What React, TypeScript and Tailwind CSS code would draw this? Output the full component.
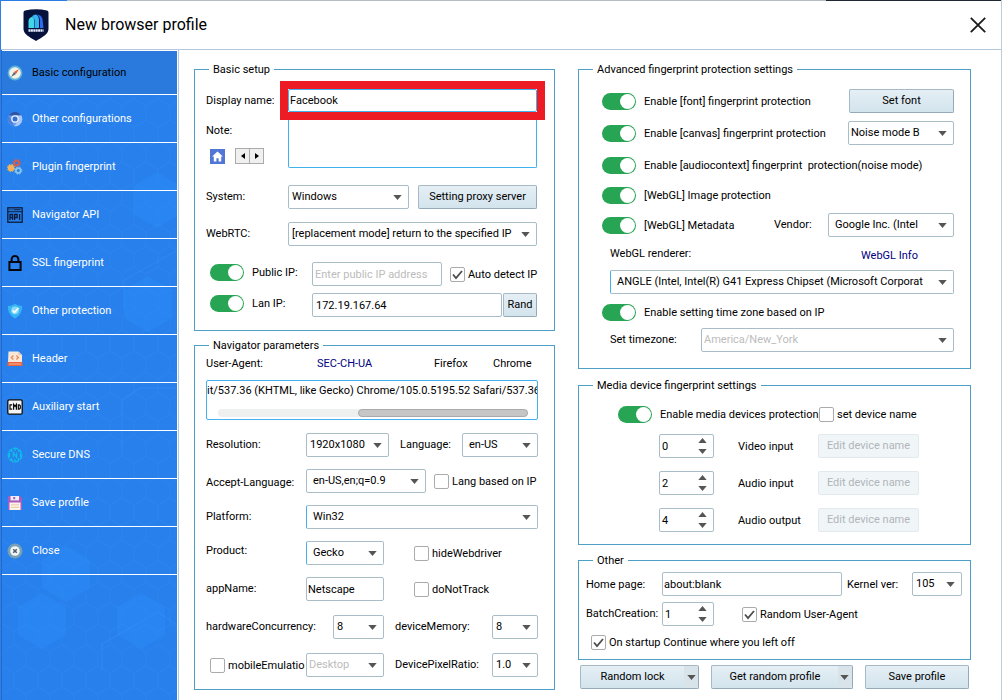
import React, { useId, useState } from "react";
import clsx from "clsx";

function Arrow({ up = false }: { up?: boolean }) {
  return (
    <svg viewBox="0 0 10 6" className={clsx("h-[5px] w-[9px]", up && "rotate-180")} aria-hidden="true">
      <path d="M0 0h10L5 6z" fill="#555" />
    </svg>
  );
}

type SelectProps = {
  id?: string;
  label: string;
  value: string;
  className?: string;
  pad?: string;
  active?: boolean;
  disabled?: boolean;
};

function Select({ id, label, value, className, pad = "pl-[3px]", active, disabled }: SelectProps) {
  return (
    <div className={clsx("relative h-6 shrink-0", className)}>
      <select
        id={id}
        aria-label={label}
        disabled={disabled}
        className={clsx(
          "h-6 w-full appearance-none rounded-xs border border-[#a9bdc9] bg-white pr-4 disabled:text-[#bcbcbc] disabled:opacity-100",
          active && "border-l-[#41b1f0]",
          pad,
        )}
      >
        <option>{value}</option>
      </select>
      <span className="pointer-events-none absolute top-0 right-[7px] flex h-6 items-center">
        <Arrow />
      </span>
    </div>
  );
}

function Field({ className, ...rest }: React.InputHTMLAttributes<HTMLInputElement>) {
  return (
    <input
      {...rest}
      className={clsx("h-6 min-w-0 rounded-xs border bg-white placeholder:text-[#bcbcbc]", className)}
    />
  );
}

function Toggle({ children, className }: { children: React.ReactNode; className?: string }) {
  return (
    <label className={clsx("flex items-center whitespace-pre", className)}>
      <input
        type="checkbox"
        role="switch"
        defaultChecked
        className="flex h-[17px] w-[34px] shrink-0 appearance-none items-center rounded-full bg-gray-400 px-px before:size-[15px] before:rounded-full before:bg-white checked:justify-end checked:bg-[#28a455]"
      />
      <span className="pt-[2px] pl-2">{children}</span>
    </label>
  );
}

function Check({ children, checked, className }: { children: React.ReactNode; checked?: boolean; className?: string }) {
  return (
    <label className={clsx("flex items-center gap-[3px] whitespace-nowrap", className)}>
      <span className="relative size-[15px] shrink-0">
        <input
          type="checkbox"
          defaultChecked={checked}
          className="peer block size-[15px] appearance-none rounded-xs border border-[#ababaf] bg-white"
        />
        <svg
          viewBox="0 0 15 15"
          className="pointer-events-none absolute inset-0 hidden peer-checked:block"
          fill="none"
          stroke="#4c4c4c"
          strokeWidth="1.8"
          aria-hidden="true"
        >
          <path d="M3 7.5l3 3.5 6-7" />
        </svg>
      </span>
      <span className="pt-px">{children}</span>
    </label>
  );
}

function Spinner({ label, start, className }: { label: string; start: number; className: string }) {
  const [value, setValue] = useState(start);
  return (
    <div className={clsx("relative h-6 shrink-0", className)}>
      <input
        type="number"
        aria-label={label}
        value={value}
        onChange={(e) => setValue(Number(e.target.value))}
        className="h-6 w-full appearance-none rounded-xs border border-[#a9bdc9] bg-white pl-[2px] [-moz-appearance:textfield] [&::-webkit-inner-spin-button]:appearance-none"
      />
      <div className="absolute top-0 right-[7px] flex h-6 flex-col justify-between py-1">
        <button type="button" aria-label={`Increase ${label}`} onClick={() => setValue(value + 1)}>
          <Arrow up />
        </button>
        <button type="button" aria-label={`Decrease ${label}`} onClick={() => setValue(Math.max(0, value - 1))}>
          <Arrow />
        </button>
      </div>
    </div>
  );
}

function Button({ children, className, menu, disabled }: { children: React.ReactNode; className?: string; menu?: boolean; disabled?: boolean }) {
  return (
    <button
      type="button"
      disabled={disabled}
      className={clsx(
        "flex h-6 shrink-0 items-center rounded-xs border whitespace-nowrap",
        disabled
          ? "border-[#e3eaee] bg-[#f0f5f8] text-[#b0b5b8]"
          : "border-[#a5b9c6] border-r-[#94aab8] border-b-[#94aab8] bg-linear-to-b from-[#e5eff5] to-[#d3e4ed]",
        className,
      )}
    >
      <span className="flex-1 text-center">{children}</span>
      {menu && (
        <span className="flex h-full w-[14px] items-center justify-center bg-[#d9e4ea]">
          <Arrow />
        </span>
      )}
    </button>
  );
}

function Group({ title, className, inner, children }: { title: string; className?: string; inner: string; children: React.ReactNode }) {
  return (
    <fieldset className={clsx("min-w-0 border border-[#4e9fc6]", className)}>
      <legend className="ml-[14px] h-[15px] px-1 leading-[15px]">{title}</legend>
      <div className={inner}>{children}</div>
    </fieldset>
  );
}

function Row({ className, children }: { className?: string; children: React.ReactNode }) {
  return <div className={clsx("flex h-6 items-center", className)}>{children}</div>;
}

const icons: Record<string, React.ReactNode> = {
  compass: (
    <>
      <circle cx="8" cy="8" r="7.4" fill="#5db2dc" />
      <circle cx="8" cy="8" r="5.8" fill="#f4f1e6" />
      <path d="M12 4 9 9 7 7z" fill="#e85a3a" />
      <path d="M4 12 7 7l2 2z" fill="#5b6878" />
    </>
  ),
  chromium: (
    <>
      <circle cx="8" cy="8" r="7.3" fill="#6d9ff0" />
      <path d="M1.7 4.4A7.3 7.3 0 0 1 14.3 4.5H8z" fill="#2c56a8" />
      <path d="M1.7 4.4 5 10.2 7 15A7.3 7.3 0 0 1 1.7 4.4z" fill="#4a7fdc" />
      <path d="M8 4.5h6.3A7.3 7.3 0 0 1 7.4 15.3l3.6-5.4z" fill="#a9c8fa" />
      <circle cx="8" cy="8" r="3.8" fill="#e9f1fc" />
      <circle cx="8" cy="8" r="2.5" fill="#356fd2" />
    </>
  ),
  gears: (
    <>
      <circle cx="9.6" cy="4" r="2.4" fill="none" stroke="#dd5c42" strokeWidth="1.8" />
      <circle cx="9.6" cy="4" r="3.6" fill="none" stroke="#dd5c42" strokeWidth="1" strokeDasharray="1.5 1.4" />
      <circle cx="4" cy="9" r="3.2" fill="#f6b256" />
      <circle cx="4" cy="9" r="3.7" fill="none" stroke="#f6b256" strokeDasharray="1.5 1.4" />
      <circle cx="11.3" cy="11.6" r="2.4" fill="none" stroke="#84c6ee" strokeWidth="1.8" />
      <circle cx="11.3" cy="11.6" r="3.6" fill="none" stroke="#84c6ee" strokeDasharray="1.5 1.4" />
    </>
  ),
  api: (
    <>
      <rect x="0.8" y="0.8" width="14.4" height="14.4" fill="none" stroke="#0b1a38" strokeWidth="1.3" />
      <path d="M1 4.8h14M2.5 2.8h1M4.5 2.8h1M6.5 2.8h7" stroke="#0b1a38" strokeWidth="1.1" />
      <path d="M3 13V7.5h2.6V13M3 10.5h2.6M7.6 13V7.5h2.6v3H7.6M12.6 7v6" fill="none" stroke="#0b1a38" strokeWidth="1.3" />
    </>
  ),
  lock: (
    <>
      <rect x="2.4" y="7" width="11.2" height="8" fill="none" stroke="#05070c" strokeWidth="2" />
      <path d="M4.6 7V4.4a3.4 3.4 0 0 1 6.8 0V7" fill="none" stroke="#05070c" strokeWidth="2" />
    </>
  ),
  shield: (
    <>
      <path d="M8 .8C5.8 2.4 3.4 3 .8 3c.2 6 2.4 10 7.2 12.4C12.8 13 15 9 15.2 3 12.6 3 10.2 2.4 8 .8z" fill="#36b5f4" />
      <circle cx="8" cy="7.4" r="3.8" fill="#8bd9fb" />
      <path d="M5.6 7.4l1.9 1.9L11.5 5" fill="none" stroke="#fff" strokeWidth="1.5" />
    </>
  ),
  header: (
    <>
      <path d="M1.5.5h10L15 4v7H1z" fill="#f7e7da" />
      <path d="M11.5.5 15 4h-3.5z" fill="#dcc3b3" />
      <path d="M.5 11h15v4H.5z" fill="#e8643e" />
      <path d="M2 13h12" stroke="#f7b59b" />
      <path d="M6.4 4.5 4.4 6.5l2 2M9.4 4.5l2 2-2 2" fill="none" stroke="#ee8a4e" strokeWidth="1.3" />
    </>
  ),
  cmd: (
    <>
      <rect x="0.8" y="0.8" width="14.4" height="14.4" rx="1.5" fill="#f4f4f4" stroke="#0a0a0a" strokeWidth="1.3" />
      <path d="M5.2 5.8H3v4.4h2.2M6.6 10.7V5.4l1.4 2 1.4-2v5.3M11.3 5.8v4.4h1l1-1V6.8l-1-1z" fill="none" stroke="#0a0a0a" strokeWidth="1.2" />
    </>
  ),
  dns: (
    <g fill="none" stroke="#10bfe6" strokeWidth="1.2">
      <circle cx="8" cy="8" r="6.8" strokeDasharray="5 1" />
      <path d="M5 2.5 4 5M11 2.5 12 5M5 13.5 4 11M11 13.5 12 11M8 1v3M8 12v3" />
      <path d="M2.5 6v4M6.3 10.5v-5l3.4 5v-5M13.5 6v4" />
    </g>
  ),
  save: (
    <>
      <path d="M1 1h12l2 2v12H1z" fill="#a95bc0" />
      <rect x="3.5" y="1" width="8.5" height="4.4" fill="#eceff3" />
      <rect x="6.2" y="2" width="2" height="2.2" fill="#a95bc0" />
      <rect x="2.5" y="7.5" width="11" height="7.5" fill="#fdf3e6" />
      <path d="M4 9.8h8M4 12.3h8" stroke="#e6c9a8" />
    </>
  ),
  close: (
    <>
      <circle cx="8" cy="8" r="7.5" fill="#78a0b4" />
      <circle cx="8" cy="8" r="4.8" fill="#f1f5f7" />
      <path d="M6.2 6.2l3.6 3.6M9.8 6.2 6.2 9.8" stroke="#4d5d68" strokeWidth="1.5" />
    </>
  ),
};

const nav = [
  ["compass", "Basic configuration"],
  ["chromium", "Other configurations"],
  ["gears", "Plugin fingerprint"],
  ["api", "Navigator API"],
  ["lock", "SSL fingerprint"],
  ["shield", "Other protection"],
  ["header", "Header"],
  ["cmd", "Auxiliary start"],
  ["dns", "Secure DNS"],
  ["save", "Save profile"],
  ["close", "Close"],
];

function HexBackdrop() {
  return (
    <svg className="absolute inset-0 size-full" aria-hidden="true">
      <defs>
        <pattern id="hex" width="24" height="42" patternUnits="userSpaceOnUse">
          <path d="M12 0v7L0 14v14l12 7v7M12 7l12 7v14l-12 7" fill="none" stroke="#3a8ef5" strokeOpacity=".3" />
        </pattern>
      </defs>
      <rect width="100%" height="100%" fill="url(#hex)" />
      <g fill="#2a8bfb" fillOpacity=".45">
        <path d="M155 122l24 14v28l-24 14-24-14v-28z" />
        <path d="M146 226l24 14v28l-24 14-24-14v-28z" />
        <path d="M64 496l24 14v28l-24 14-24-14v-28z" />
        <path d="M40 543l24 14v28l-24 14-24-14v-28z" />
        <path d="M139 543l24 14v28l-24 14-24-14v-28z" />
      </g>
      <path d="M100 620v-26l56-32 20 14M120 400V350l18-12h38M122 260v-30l54-30" fill="none" stroke="#3f97ff" strokeOpacity=".4" />
    </svg>
  );
}

function Sidebar() {
  return (
    <nav className="relative w-[177px] shrink-0 border-r border-l border-r-white border-l-[#2169cc] bg-[#2780ec]">
      <HexBackdrop />
      <ul className="relative border-t border-white">
        {nav.map(([icon, text], i) => (
          <li key={text} className={clsx("border-b border-white", i === 0 ? "h-11 bg-[#2a78d8]/80" : "h-12")}>
            <button
              type="button"
              className={clsx("flex size-full items-center gap-[9px] pl-[5px] text-left", i === 0 ? "text-black" : "text-white")}
            >
              <svg viewBox="0 0 16 16" className="size-4 shrink-0" aria-hidden="true">
                {icons[icon]}
              </svg>
              <span className="pt-px">{text}</span>
            </button>
          </li>
        ))}
      </ul>
    </nav>
  );
}

function BasicSetup() {
  const id = useId();
  return (
    <Group title="Basic setup" inner="pr-[17px] pb-[13px] pl-[11px]">
      <div className="flex h-[43px] items-center pt-1">
        <label htmlFor={`${id}-name`} className="w-[82px] shrink-0">Display name:</label>
        <div className="-mr-2 -ml-2 flex h-[39px] flex-1 border-8 border-[#ed1b24]">
          <Field id={`${id}-name`} defaultValue="Facebook" className="h-full w-full border-[#41b1f0] px-px" />
        </div>
      </div>
      <div className="flex h-12">
        <div className="flex w-[82px] shrink-0 flex-col gap-[9px] pt-[3px]">
          <label htmlFor={`${id}-note`} className="leading-4">Note:</label>
          <div className="flex items-center pl-1">
            <button type="button" aria-label="Home" className="mr-[10px] flex size-[15px] items-center justify-center bg-[#5276d6]">
              <svg viewBox="0 0 14 14" className="size-[13px]" aria-hidden="true">
                <path d="M7 1.5 1.2 7H3v5.5h2.8V9h2.4v3.5H11V7h1.8z" fill="#fff" />
              </svg>
            </button>
            {["Previous", "Next"].map((name, i) => (
              <button key={name} type="button" aria-label={name} className="-mr-px flex h-4 w-[15px] items-center justify-center border border-[#ababab] bg-[#f0f0f0]">
                <svg viewBox="0 0 4 6" className={clsx("h-[6px] w-1", i === 0 && "rotate-180")} aria-hidden="true">
                  <path d="M0 0l4 3-4 3z" fill="#000" />
                </svg>
              </button>
            ))}
          </div>
        </div>
        <textarea id={`${id}-note`} className="h-12 min-w-0 flex-1 resize-none rounded-b-xs border border-t-0 border-[#41b1f0] px-px" />
      </div>
      <Row className="mt-[17px]">
        <label htmlFor={`${id}-sys`} className="w-[82px] shrink-0">System:</label>
        <Select id={`${id}-sys`} label="System" value="Windows" className="mr-[9px] w-[121px]" />
        <Button className="flex-1">Setting proxy server</Button>
      </Row>
      <Row className="mt-[13px]">
        <label htmlFor={`${id}-rtc`} className="w-[82px] shrink-0">WebRTC:</label>
        <Select id={`${id}-rtc`} label="WebRTC" value="[replacement mode] return to the specified IP" className="flex-1" />
      </Row>
      <Row className="mt-4">
        <Toggle className="h-5 w-[106px] shrink-0 self-start pl-1">Public IP:</Toggle>
        <Field aria-label="Public IP address" placeholder="Enter public IP address" className="mr-2 flex-1 border-[#a9bdc9] pl-[2px]" />
        <Check checked className="w-[87px]">Auto detect IP</Check>
      </Row>
      <Row className="mt-[7px]">
        <Toggle className="h-5 w-[106px] shrink-0 self-start pl-1">Lan IP:</Toggle>
        <Field aria-label="Lan IP address" defaultValue="172.19.167.64" className="mr-px flex-1 border-[#a9bdc9] pl-[3px]" />
        <Button className="w-[34px]">Rand</Button>
      </Row>
    </Group>
  );
}

function NavigatorParameters() {
  const id = useId();
  return (
    <Group title="Navigator parameters" className="mt-[7px]" inner="pr-4 pb-3 pl-[11px]">
      <div className="flex h-[22px] items-center">
        <label htmlFor={`${id}-ua`} className="w-[111px]">User-Agent:</label>
        <a href="#sec-ch-ua" className="flex-1 text-[#000080]">SEC-CH-UA</a>
        <button type="button" className="w-[59px] text-left">Firefox</button>
        <button type="button" className="w-[45px] text-left">Chrome</button>
      </div>
      <div className="mt-[5px] flex h-10 flex-col justify-between rounded-xs border border-[#41b1f0] pb-[2px]">
        <input
          id={`${id}-ua`}
          defaultValue="it/537.36 (KHTML, like Gecko) Chrome/105.0.5195.52 Safari/537.36"
          className="h-[18px] w-full min-w-0"
        />
        <div className="mr-[9px] ml-[11px] flex h-2 justify-end rounded-full bg-[#eeefef]">
          <div className="w-[55%] rounded-full border border-[#aaa] bg-[#c6c6c6]" />
        </div>
      </div>
      <Row className="mt-[13px]">
        <label htmlFor={`${id}-res`} className="w-[100px] shrink-0">Resolution:</label>
        <Select id={`${id}-res`} label="Resolution" value="1920x1080" className="w-[83px]" />
        <label htmlFor={`${id}-lang`} className="flex-1 pl-[11px]">Language:</label>
        <Select id={`${id}-lang`} label="Language" value="en-US" pad="pl-[6px]" className="w-[76px]" />
      </Row>
      <Row className="mt-3">
        <label htmlFor={`${id}-acc`} className="w-[100px] shrink-0 pt-1">Accept-Language:</label>
        <Select id={`${id}-acc`} label="Accept-Language" value="en-US,en;q=0.9" pad="pl-[6px]" className="mr-2 w-[120px]" />
        <Check className="flex-1">Lang based on IP</Check>
      </Row>
      <Row className="mt-3">
        <label htmlFor={`${id}-plat`} className="w-[100px] shrink-0">Platform:</label>
        <Select id={`${id}-plat`} label="Platform" value="Win32" pad="pl-[6px]" active className="flex-1" />
      </Row>
      <Row className="mt-3">
        <label htmlFor={`${id}-prod`} className="w-[100px] shrink-0 pb-1">Product:</label>
        <Select id={`${id}-prod`} label="Product" value="Gecko" pad="pl-[6px]" active className="mr-[30px] w-[78px]" />
        <Check>hideWebdriver</Check>
      </Row>
      <Row className="mt-3">
        <label htmlFor={`${id}-app`} className="w-[100px] shrink-0">appName:</label>
        <Field id={`${id}-app`} defaultValue="Netscape" className="mr-[30px] w-[78px] border-[#a9bdc9] px-px" />
        <Check>doNotTrack</Check>
      </Row>
      <Row className="mt-[14px]">
        <label htmlFor={`${id}-hw`} className="w-[127px] shrink-0">hardwareConcurrency:</label>
        <Select id={`${id}-hw`} label="hardwareConcurrency" value="8" className="w-[51px]" />
        <label htmlFor={`${id}-mem`} className="flex-1 pl-[11px]">deviceMemory:</label>
        <Select id={`${id}-mem`} label="deviceMemory" value="8" className="w-[46px]" />
      </Row>
      <Row className="mt-[14px]">
        <Check className="w-[100px] shrink-0 pl-1">mobileEmulatio</Check>
        <Select label="Emulated device" value="Desktop" pad="pl-[2px]" disabled className="w-[78px]" />
        <label htmlFor={`${id}-dpr`} className="flex-1 pl-[11px]">DevicePixelRatio:</label>
        <Select id={`${id}-dpr`} label="DevicePixelRatio" value="1.0" className="w-[46px]" />
      </Row>
    </Group>
  );
}

function AdvancedSettings() {
  const id = useId();
  return (
    <Group title="Advanced fingerprint protection settings" inner="pr-4 pb-4 pl-[23px]">
      <Row className="mt-3">
        <Toggle className="flex-1">Enable [font] fingerprint protection</Toggle>
        <Button className="w-[105px]">Set font</Button>
      </Row>
      <Row className="mt-2">
        <Toggle className="flex-1">Enable [canvas] fingerprint protection</Toggle>
        <Select label="Canvas noise mode" value="Noise mode B" pad="pl-[2px]" className="w-[106px]" />
      </Row>
      <Row className="mt-2">
        <Toggle>{"Enable [audiocontext] fingerprint  protection(noise mode)"}</Toggle>
      </Row>
      <Row className="mt-[6px]">
        <Toggle>[WebGL] Image protection</Toggle>
      </Row>
      <Row className="mt-[6px]">
        <Toggle className="flex-1">[WebGL] Metadata</Toggle>
        <label htmlFor={`${id}-vendor`} className="w-[54px]">Vendor:</label>
        <Select id={`${id}-vendor`} label="Vendor" value="Google Inc. (Intel" pad="pl-[6px]" className="w-[126px]" />
      </Row>
      <Row className="mt-[5px] pl-2">
        <label htmlFor={`${id}-renderer`} className="flex-1">WebGL renderer:</label>
        <a href="#webgl-info" className="w-[93px] pt-1 text-[#000080]">WebGL Info</a>
      </Row>
      <Row className="mt-1 pl-2">
        <Select id={`${id}-renderer`} label="WebGL renderer" value="ANGLE (Intel, Intel(R) G41 Express Chipset (Microsoft Corporat" pad="pl-[6px]" active className="flex-1" />
      </Row>
      <Row className="mt-[6px]">
        <Toggle>Enable setting time zone based on IP</Toggle>
      </Row>
      <Row className="mt-1 pl-2">
        <label htmlFor={`${id}-tz`} className="w-[91px] shrink-0">Set timezone:</label>
        <Select id={`${id}-tz`} label="Timezone" value="America/New_York" pad="pl-[2px]" disabled className="flex-1" />
      </Row>
    </Group>
  );
}

const devices = [
  { name: "Video input", count: 0 },
  { name: "Audio input", count: 2 },
  { name: "Audio output", count: 4 },
];

function MediaSettings() {
  return (
    <Group title="Media device fingerprint settings" className="mt-[9px]" inner="pr-4 pb-3 pl-[39px]">
      <Row className="mt-[9px]">
        <Toggle className="w-[201px]">Enable media devices protection</Toggle>
        <Check>set device name</Check>
      </Row>
      <div className="mt-2 flex flex-col gap-[13px] pl-[41px]">
        {devices.map((device) => (
          <Row key={device.name}>
            <Spinner label={device.name} start={device.count} className="mr-6 w-[55px]" />
            <span className="w-20 pt-[2px]">{device.name}</span>
            <Button disabled className="w-[101px]">Edit device name</Button>
          </Row>
        ))}
      </div>
    </Group>
  );
}

function OtherSettings() {
  const id = useId();
  return (
    <Group title="Other" className="mt-2" inner="pr-2 pb-[5px] pl-[7px]">
      <Row className="mt-1">
        <label htmlFor={`${id}-home`} className="w-[76px] shrink-0 pt-[2px]">Home page:</label>
        <Field id={`${id}-home`} defaultValue="about:blank" className="mr-[5px] flex-1 border-[#a9bdc9] px-px" />
        <label htmlFor={`${id}-ver`} className="w-[65px] shrink-0 pt-[2px]">Kernel ver:</label>
        <Select id={`${id}-ver`} label="Kernel version" value="105" className="w-[50px]" />
      </Row>
      <Row className="mt-[6px]">
        <span className="w-[76px] shrink-0">BatchCreation:</span>
        <Spinner label="BatchCreation" start={1} className="mr-7 w-[52px]" />
        <Check checked>Random User-Agent</Check>
      </Row>
      <Row className="mt-1 pl-[5px]">
        <Check checked>On startup Continue where you left off</Check>
      </Row>
    </Group>
  );
}

function Header() {
  return (
    <header className="flex h-[49px] items-center border-b border-[#b3c8dc] pr-[15px] pl-[22px]">
      <svg viewBox="0 0 26 32" className="mr-4 h-8 w-[26px]" aria-hidden="true">
        <path d="M2 1.5Q13-1 24 1.5q1.5.3 1.5 2V20c0 5-6 8-12.5 12C6.500 28 .5 25 .5 20V3.500q0-1.700 1.500-2z" fill="#06123c" />
        <path d="M5.500 19v-6.500q0-3.500 3-4.500 2.500-.5 2.500 3V19z" fill="#41d6e8" />
        <path d="M9 7.500Q10.500 5.500 13 5.500q2.500 1 3 5V19h-4.500v-8q-.5-2.500-2.500-3.500z" fill="#35b4f2" />
        <path d="M13.500 5.500q5 .3 6 4.500l1 9h-3.500v-8q-.5-4-3.500-5.500z" fill="#2c6bf0" />
        <path d="M5.500 21.500h15" stroke="#e6ecff" strokeWidth="2.5" strokeDasharray="2 .4" />
      </svg>
      <h1 className="flex-1 text-base">New browser profile</h1>
      <button type="button" aria-label="Close window">
        <svg viewBox="0 0 16 16" className="size-4" stroke="#1a1a1a" strokeWidth="1.8" aria-hidden="true">
          <path d="M.8.8l14.400 14.400M15.200.8.8 15.200" />
        </svg>
      </button>
    </header>
  );
}

export default function App() {
  return (
    <div className="flex min-h-screen flex-col border-r border-l border-r-[#c3ccd4] border-l-[#2f7fe4] bg-white font-['Roboto','Liberation_Sans',sans-serif] text-[11px] leading-4 text-black">
      <div className="flex h-px">
        <div className="w-[66px] bg-[#2b7de6]" />
        <div className="flex-1 bg-[#b5bcc2]" />
        <div className="w-[175px] bg-[#1f2830]" />
      </div>
      <Header />
      <div className="flex flex-1">
        <Sidebar />
        <main className="grid min-w-0 flex-1 grid-cols-[361fr_393fr] gap-[23px] border-l border-[#b3c8dc] pt-3 pr-[30px] pl-[15px]">
          <div className="min-w-0">
            <BasicSetup />
            <NavigatorParameters />
          </div>
          <div className="min-w-0">
            <AdvancedSettings />
            <MediaSettings />
            <OtherSettings />
            <div className="mt-[5px] flex gap-3 px-[2px]">
              <Button menu className="flex-[119]">Random lock</Button>
              <Button menu className="flex-[142]">Get random profile</Button>
              <Button className="flex-[104]">Save profile</Button>
            </div>
          </div>
        </main>
      </div>
    </div>
  );
}
